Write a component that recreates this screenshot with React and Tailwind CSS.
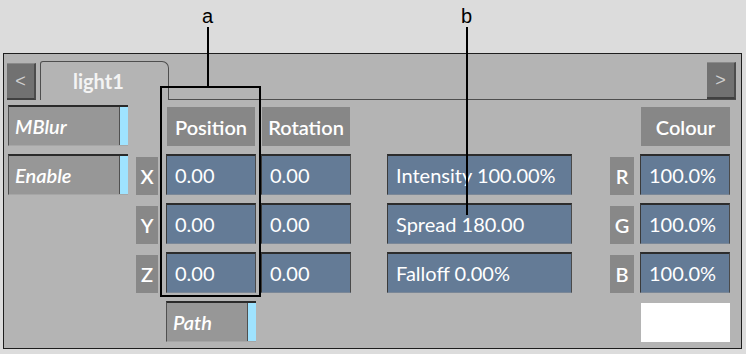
import React from "react";

const ui = "font-['Lato',sans-serif] text-[20px] text-white whitespace-nowrap";

function Field({ children, className = "" }) {
  return (
    <div
      className={`flex items-center h-[41px] pl-[8px] bg-[#647b96] border-t-2 border-t-[#2c2c2c] border-l border-l-[#3a3a3a] border-r border-r-[#4a4a4a] border-b border-b-[#7a8797] ${ui} ${className}`}
    >
      {children}
    </div>
  );
}

function Label({ children, className = "" }) {
  return (
    <div
      className={`self-end flex items-center justify-center h-[38px] bg-[#888888] font-semibold ${ui} ${className}`}
    >
      {children}
    </div>
  );
}

function Header({ children, className = "" }) {
  return (
    <div
      className={`self-end flex items-center justify-center h-[39px] bg-[#878787] font-semibold ${ui} ${className}`}
    >
      {children}
    </div>
  );
}

function Toggle({ children, className = "" }) {
  return (
    <div
      className={`flex h-[41px] bg-[#979797] border-t-2 border-t-[#2a2a2a] border-l border-l-[#505050] border-b border-b-[#a6a6a6] ${className}`}
    >
      <span className={`flex-1 flex items-center pl-[6px] italic font-semibold ${ui}`}>
        {children}
      </span>
      <span className="w-[9px] bg-[#9fe3ff] border-l border-l-[#505050]" />
    </div>
  );
}

function ArrowButton({ children }) {
  return (
    <div className="flex items-center justify-center w-[29px] h-[37px] bg-[#717171] border-r-2 border-r-[#4c4c4c] border-b-2 border-b-[#404040] border-t border-t-[#8a8a8a] font-['Liberation_Sans',sans-serif] text-[18px] text-[#cfcfcf]">
      {children}
    </div>
  );
}

export default function App() {
  const rows = [
    { l: "X", row: "row-start-2" },
    { l: "Y", row: "row-start-3" },
    { l: "Z", row: "row-start-4" },
  ];
  const rgb = [
    { l: "R", row: "row-start-2", v: "Intensity 100.00%" },
    { l: "G", row: "row-start-3", v: "Spread 180.00" },
    { l: "B", row: "row-start-4", v: "Falloff 0.00%" },
  ];

  return (
    <div className="relative w-[746px] h-[354px] bg-[#dcdcdc] pt-[53px] pl-[3px] overflow-hidden">
      <div className="w-[739px] h-[296px] bg-[#b4b4b4] border border-[#1e1e1e]">
        {/* tab strip */}
        <div className="flex items-end h-[46px] pl-[3px] pr-[5px]">
          <ArrowButton>&lt;</ArrowButton>
          <div className="flex items-center w-[129px] h-[39px] ml-[4px] pl-[32px] border-l border-t border-r border-[#4e4e4e] rounded-tl-[3px] rounded-tr-[7px] font-['Lato',sans-serif] text-[20px] font-bold text-[#f4f4f4]">
            light1
          </div>
          <div className="flex-1 self-stretch border-b border-b-[#4e4e4e]" />
          <div className="border-b border-b-[#4e4e4e]">
            <ArrowButton>&gt;</ArrowButton>
          </div>
        </div>

        {/* controls */}
        <div className="grid grid-cols-[120px_8px_22px_8px_90px_5px_90px_36px_185px_38px_24px_6px_90px] grid-rows-[41px_41px_41px_41px_41px] gap-y-[8px] mt-[5px] ml-[4px]">
          <Toggle className="col-start-1 row-start-1">MBlur</Toggle>
          <Toggle className="col-start-1 row-start-2">Enable</Toggle>

          <Header className="col-start-5 row-start-1 mx-[1px]">Position</Header>
          <Header className="col-start-7 row-start-1 mx-[1px]">Rotation</Header>
          <Header className="col-start-13 row-start-1 ml-[1px]">Colour</Header>

          {rows.map((r) => (
            <React.Fragment key={r.l}>
              <Label className={`col-start-3 ${r.row}`}>{r.l}</Label>
              <Field className={`col-start-5 ${r.row}`}>0.00</Field>
              <Field className={`col-start-7 ${r.row}`}>0.00</Field>
            </React.Fragment>
          ))}

          {rgb.map((r) => (
            <React.Fragment key={r.l}>
              <Field className={`col-start-9 ${r.row}`}>{r.v}</Field>
              <Label className={`col-start-11 ${r.row}`}>{r.l}</Label>
              <Field className={`col-start-13 ${r.row}`}>100.0%</Field>
            </React.Fragment>
          ))}

          <Toggle className="col-start-5 row-start-5">Path</Toggle>
          <div className="col-start-13 row-start-5 self-end h-[39px] ml-[1px] bg-white" />
        </div>
      </div>

      {/* callouts */}
      <span className="absolute left-[202px] top-[6px] leading-none font-['Liberation_Sans',sans-serif] text-[20px] text-black">
        a
      </span>
      <div className="absolute left-[207px] top-[27px] w-[2px] h-[60px] bg-black" />
      <div className="absolute left-[160px] top-[86px] w-[101px] h-[211px] border-2 border-black" />
      <span className="absolute left-[461px] top-[6px] leading-none font-['Liberation_Sans',sans-serif] text-[20px] text-black">
        b
      </span>
      <div className="absolute left-[466px] top-[27px] w-[2px] h-[188px] bg-black" />
    </div>
  );
}
